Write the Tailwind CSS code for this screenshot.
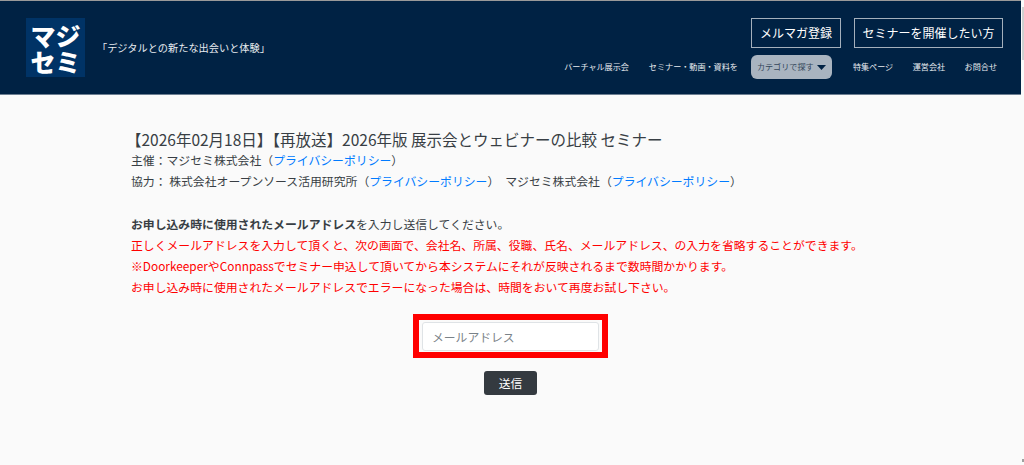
<!DOCTYPE html>
<html lang="ja">
<head>
    <meta charset="UTF-8">
    <meta name="viewport" content="width=device-width, initial-scale=1.0">
    <title>メールアドレス入力</title>
    <script src="https://cdn.jsdelivr.net/npm/@tailwindcss/browser@4"></script>
</head>
<body class="bg-[#fafafa] h-[465px] overflow-hidden flex font-['Noto_Sans_CJK_JP','Noto_Sans',sans-serif] text-[#383e44]">
    <div class="w-[1021px] shrink-0">
        <!-- Header -->
        <header class="h-[95px] bg-[#002244] border-t border-t-[#9a9a9a] border-b border-b-[#6d7f92] pl-[26px] pr-[18px] flex justify-between">
            <div class="flex items-center">
                <div class="w-[59px] h-[59px] bg-[#003366] text-white font-black text-[25px] leading-[26px] text-center flex flex-col justify-center">
                    <span>マジ</span>
                    <span>セミ</span>
                </div>
                <p class="ml-[12px] mt-[1px] text-[10.2px] text-[#e8ecf0]">「デジタルとの新たな出会いと体験」</p>
            </div>
            <div class="flex flex-col items-end pt-[17px]">
                <div class="flex gap-[13px]">
                    <a class="w-[90px] h-[29.5px] border border-[#a5b0bc] text-white text-[12px] flex items-center justify-center">メルマガ登録</a>
                    <a class="w-[149px] h-[29.5px] border border-[#a5b0bc] text-white text-[12px] flex items-center justify-center">セミナーを開催したい方</a>
                </div>
                <nav class="mt-[7.5px] mr-[6px] flex items-center text-[8.1px] text-[#e8ecf0]">
                    <a class="mr-[20px]">バーチャル展示会</a>
                    <a class="mr-[13px]">セミナー・動画・資料を</a>
                    <a class="w-[81px] h-[24px] rounded-[6px] bg-[#a9b4c0] text-[#33465a] flex items-center justify-between px-[6px] mr-[21px]">
                        カテゴリで探す
                        <svg width="9" height="5" viewBox="0 0 9 5"><path d="M0 0h9L4.5 5z" fill="#002244"/></svg>
                    </a>
                    <a class="mr-[19.5px]">特集ページ</a>
                    <a class="mr-[19.5px]">運営会社</a>
                    <a>お問合せ</a>
                </nav>
            </div>
        </header>

        <!-- Content -->
        <main class="pl-[131px] pt-[35px]">
            <h1 class="text-[15.5px] leading-[19px] ml-[-5px]">【2026年02月18日】【再放送】2026年版 展示会とウェビナーの比較 セミナー</h1>
            <div class="text-[11.85px] leading-[21.3px]">
                <p>主催：マジセミ株式会社（<a class="text-[#007bff]">プライバシーポリシー</a>）</p>
                <p>協力： 株式会社オープンソース活用研究所（<a class="text-[#007bff]">プライバシーポリシー</a>）　マジセミ株式会社（<a class="text-[#007bff]">プライバシーポリシー</a>）</p>
                <div class="mt-[21px]">
                    <p><b>お申し込み時に使用されたメールアドレス</b>を入力し送信してください。</p>
                    <p class="text-[#ff0000]">正しくメールアドレスを入力して頂くと、次の画面で、会社名、所属、役職、氏名、メールアドレス、の入力を省略することができます。</p>
                    <p class="text-[#ff0000]">※DoorkeeperやConnpassでセミナー申込して頂いてから本システムにそれが反映されるまで数時間かかります。</p>
                    <p class="text-[#ff0000]">お申し込み時に使用されたメールアドレスでエラーになった場合は、時間をおいて再度お試し下さい。</p>
                </div>
            </div>
        </main>

        <!-- Form -->
        <form class="mt-[16.5px] flex flex-col items-center">
            <div class="w-[195px] h-[44px] border-[6px] border-[#ff0000] px-[3px] py-[1.5px]">
                <input type="email" placeholder="メールアドレス" class="w-full h-full bg-white border border-[#dfe3e6] rounded-[3px] px-[9px] pt-[1px] text-[11.8px] placeholder:text-[#7a8288] outline-none">
            </div>
            <button type="button" class="mt-[12.5px] w-[53px] h-[24px] rounded-[3px] bg-[#343a40] text-white text-[11.8px]">送信</button>
        </form>
    </div>

    <!-- Scrollbar -->
    <div class="flex-1 flex flex-col justify-between pt-[7px] pb-[3px] pl-[1px]">
        <div class="h-[53px] bg-[#d0d0d0]"></div>
        <div class="h-[3px] bg-[#a0a0a0]"></div>
    </div>
</body>
</html>
